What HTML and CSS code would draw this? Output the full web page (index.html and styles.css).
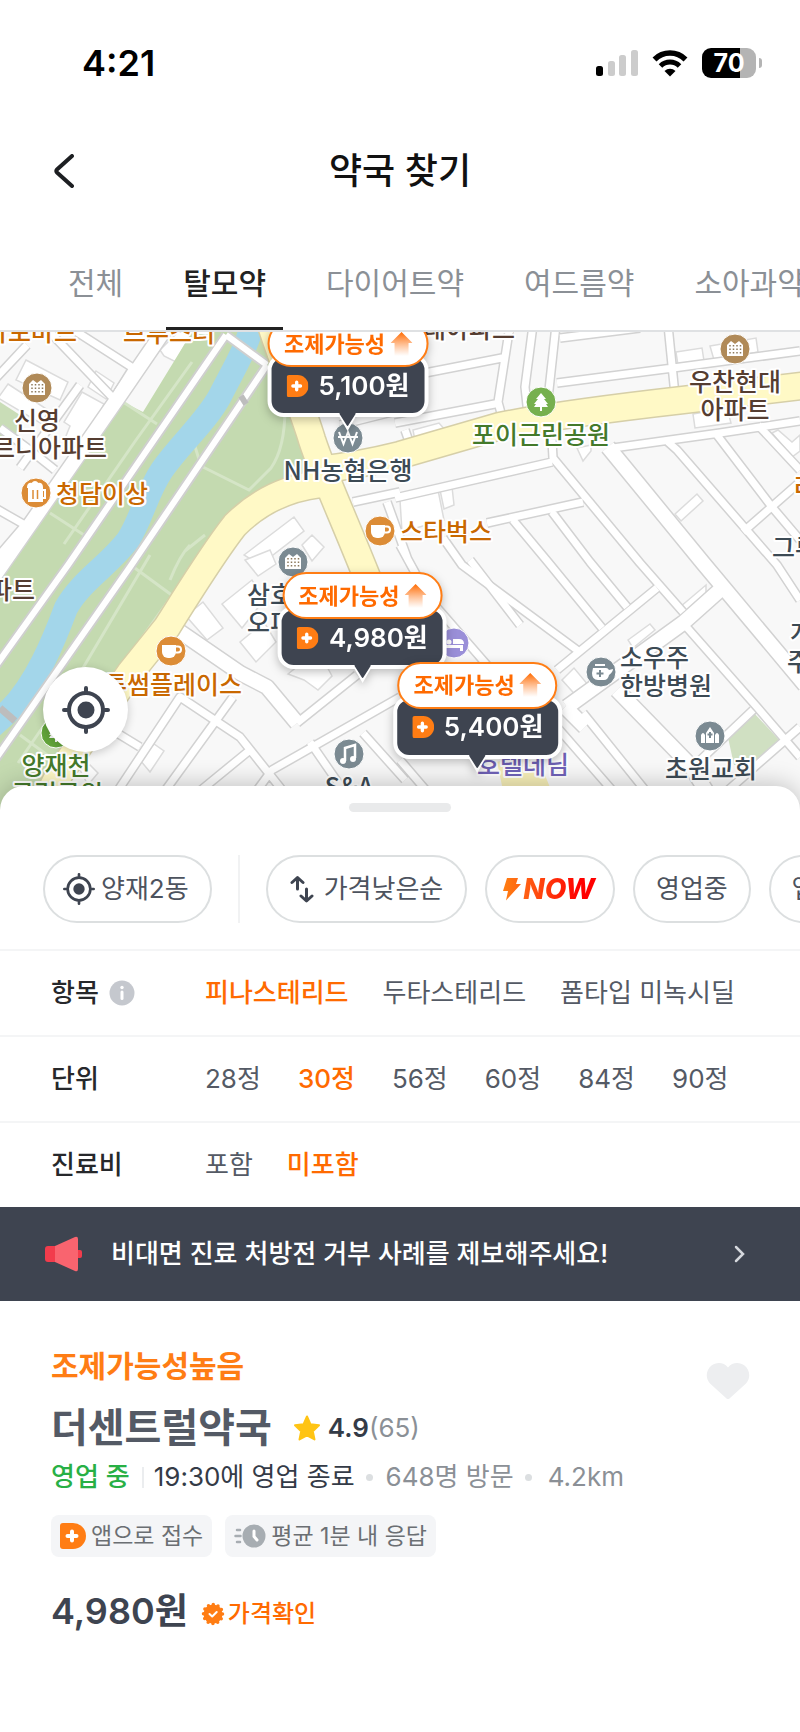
FILE: index.html
```html
<!DOCTYPE html>
<html lang="ko">
<head>
<meta charset="utf-8">
<meta name="viewport" content="width=device-width, initial-scale=1">
<title>약국 찾기</title>
<link rel="stylesheet" href="styles.css">
</head>
<body>
<svg class="defs" width="0" height="0" aria-hidden="true">
  <defs>
    <linearGradient id="arrowFade" x1="0" y1="0" x2="0" y2="1">
      <stop offset="0" stop-color="#ff6a00"/><stop offset="1" stop-color="#ff8a3c" stop-opacity="0"/>
    </linearGradient>
    <linearGradient id="boltFade" x1="0" y1="0" x2="1" y2="0">
      <stop offset="0" stop-color="#ff7f12"/><stop offset="1" stop-color="#ff6412"/>
    </linearGradient>
    <symbol id="target" viewBox="0 0 48 48">
      <circle cx="24" cy="24" r="17" fill="none" stroke="#3e4450" stroke-width="4"/>
      <circle cx="24" cy="24" r="8.500" fill="#3e4450"/>
      <path d="M24 2v5M24 41v5M2 24h5M41 24h5" stroke="#3e4450" stroke-width="4" stroke-linecap="round"/>
    </symbol>
    <symbol id="brand" viewBox="0 0 26 26">
      <path d="M3 0h10a13 13 0 0 1 0 26H3a3 3 0 0 1-3-3V3a3 3 0 0 1 3-3z" fill="#ff7d14"/>
      <path d="M12 8.500v9M7.500 13h9" stroke="#fff" stroke-width="4" stroke-linecap="round"/>
    </symbol>
    <symbol id="up" viewBox="0 0 22 24">
      <path d="M11 0 22 11h-4v13H4V11H0z" fill="url(#arrowFade)"/>
    </symbol>
    <symbol id="tail" viewBox="0 0 26 18">
      <path d="M1 4h4l8 14 8-14h4z" fill="#fff"/>
      <path d="M5 0h16v1l-7 11q-1 2-2 0L5 1z" fill="#3e4450"/>
    </symbol>
    <symbol id="apartment" viewBox="0 0 30 30">
      <path d="M7 22V11l4-4 4 3 4-3 4 4v11z" fill="#fff"/>
      <path d="M10 11v10M13.500 11v10M17 11v10M20.500 11v10" stroke="#8d7a5c" stroke-width="1.500" stroke-dasharray="1.500 2"/>
    </symbol>
    <symbol id="cup" viewBox="0 0 30 30">
      <path d="M6 9h14v7a6 6 0 0 1-6 6h-2a6 6 0 0 1-6-6z" fill="#fff"/>
      <path d="M20 10.500h2a2.500 2.500 0 0 1 0 6h-2.500" fill="none" stroke="#fff" stroke-width="2"/>
    </symbol>
    <symbol id="tree" viewBox="0 0 30 30">
      <path d="M15 6l5 6h-2l4 5h-2l2 3H8l2-3H8l4-5h-2z" fill="#fff"/><path d="M15 18v6" stroke="#fff" stroke-width="2"/>
    </symbol>
    <g id="lanes">
      <path d="M613 448 720 433 800 421M557 383 673 368 800 351M560 338 640 328M668 325 675 395M533 325 525 387 528 415M556 325 549 390 545 415M510 325 498 402 505 428M425 373 507 357M395 423 500 403M395 498 552 462M552 440 553 458 640 563 683 612M487 523 583 502M513 520 548 562 602 628M552 512 590 562 627 607M443 538 462 565 577 650M668 442 677 450 777 565 800 600M717 435 772 507 800 540M758 425 800 470M743 532 800 482M557 670 657 588M683 623 757 707 800 757M583 713 653 800M693 767 753 710M717 800 800 727M557 727 625 805M433 603 500 680 520 695M400 760 430 795M405 430 412 450"/>
      <path d="M310 742 350 800M297 723 357 675M115 795 180 697 240 737 290 800M117 733 140 747M162 795 233 697M195 795 250 750M250 800 272 770 400 697M363 733 405 780M27 345-4 378M43 325 113 398M66 325 133 368 118 392M80 385 20 468M0 428 30 450 55 470M-5 508 25 525-5 560M353 502 400 492M387 502 408 560M400 545 430 600M340 425 400 410M470 560 520 625"/>
    </g>
    <path id="parkRoads" d="M226 335 68 565-5 667M267 365 130 567-5 760M226 335l41 30"/>
    <path id="streets" d="M-5 575 68 470 118 398 170 322M608 447 703 563 805 685M173 627 240 673 267 687 297 723M567 707 683 623 720 590M617 690 690 765 715 805M565 707l20 20"/>
    <path id="avenues" d="M271 325C285 370 300 400 312 440 325 480 345 520 378 605M318 470Q360 465 400 455L500 426Q560 414 683 400L810 385M320 484Q270 490 235 525 215 550 167 627L130 673 60 773 40 812"/>
  </defs>
</svg>

<div class="app">
  <header class="top">
    <div class="status">
      <span class="status-time">4:21</span>
      <div class="status-icons">
        <svg width="42" height="28" viewBox="0 0 42 28" aria-hidden="true">
          <rect x="0" y="17" width="7" height="10" rx="2.500" fill="#000"/>
          <rect x="12" y="12" width="7" height="15" rx="2.500" fill="#ccc"/>
          <rect x="23" y="6" width="7" height="21" rx="2.500" fill="#ccc"/>
          <rect x="35" y="1" width="7" height="26" rx="2.500" fill="#ccc"/>
        </svg>
        <svg width="36" height="28" viewBox="0 0 36 28" aria-hidden="true">
          <path d="M2.500 10.500a22 22 0 0 1 31 0" fill="none" stroke="#000" stroke-width="5.500"/>
          <path d="M8.500 17a13.500 13.500 0 0 1 19 0" fill="none" stroke="#000" stroke-width="5"/>
          <path d="M12.500 22a8 8 0 0 1 11 0L18 27.500z" fill="#000"/>
        </svg>
        <span class="battery"><span class="battery-body">70</span><span class="battery-nub"></span></span>
      </div>
    </div>
    <div class="appbar">
      <button class="back" aria-label="뒤로">
        <svg width="20" height="34" viewBox="0 0 20 34" aria-hidden="true"><path d="M18 2 3 15.500q-1.500 1.500 0 3L18 32" fill="none" stroke="#1d1f22" stroke-width="4" stroke-linecap="round"/></svg>
      </button>
      <h1 class="title">약국 찾기</h1>
    </div>
    <nav class="tabs">
      <button class="tab">전체</button>
      <button class="tab tab-on">탈모약</button>
      <button class="tab">다이어트약</button>
      <button class="tab">여드름약</button>
      <button class="tab">소아과약</button>
    </nav>
  </header>

  <section class="map" aria-label="지도">
    <svg class="map-art" viewBox="0 332 800 480" aria-hidden="true">
      <rect x="0" y="332" width="800" height="480" fill="#f8f8f8"/>
      <g fill="#fff" stroke="#dcdcdc" stroke-width="1.500">
        <path d="M26 360l42 22-8 18-44-20zM8 384l40 26-6 14-44-26zM82 392l22 12-20 44-18-12 4-10-6-4zM96 371l18 12-8 16-18-12zM160 350l18-18 14 0-12 22-4 8-12-6zM244 555l50-38 10 14-44 34zM302 545l10-10 12 12-12 14z"/>
        <path d="M413 430l26-7 8 9-32 9zM400 500l38-10 6 30-42 12zM440 490l12-3 2 18-10 4zM676 352l26-4 2 13-26 4zM710 346l46-8 2 14-44 8zM693 414l34-6 4 15-36 5zM772 433l6-3 14 12 8-7v16l-8 6zM675 514l22-20 6 7-22 20zM577 448l14-3v6l-8 10z"/>
        <path d="M186 616l17-14 20 26-16 12zM222 604l30-24 12 20-22 28zM240 642l24-20 12 20-20 20zM288 674l30-24 14 26-14 14-14-10zM140 760l14-16 10 7-14 21zM562 680l12-12 20 24-14 8zM680 607l26-22v12l-22 16zM628 640l22-16 5 6-22 18zM245 560l25-10 6 14-18 12zM80 770l10-5 8 8-10 12z"/>
      </g>
      <path d="M192 332 143 412 123 402 13 560 0 580V812H40L60 775 130 673 207 565 235 525 287 492 310 470 300 425 262 332z" fill="#c4dab0"/>
      <path d="M0 402l20 13-6 30-14-8z" fill="#c9ddb7"/>
      <path d="M727 733l26-21 29 31-22 22-26 0z" fill="#d0e0c2"/>
      <g fill="none" stroke="#d5e5c7" stroke-width="3">
        <path d="M192 362l-56 78-72 104M123 402l34 22M50 513l34 22M193 440l8 26 48 24 22-22q14-20 14-60M190 545q-10 10-20 35M205 535l-20 16M128 563l45 33M176 590l-60 84M150 555l-70 118-62 90M20 735l30 22"/>
      </g>
      <path d="M252 325C246 350 232 372 220 396 206 422 180 444 162 470 146 494 142 518 128 540 108 566 80 582 66 608 54 640 36 684 10 710L-10 728" fill="none" stroke="#a3d6ea" stroke-width="24"/>
      <path d="M0 708l15 13" stroke="#bdbdbd" stroke-width="7"/>
      <path d="M262 332l8 26" stroke="#c4c4c4" stroke-width="5"/>

      <g fill="none" stroke-linejoin="round">
        <use href="#lanes" stroke="#d2d2d2" stroke-width="10"/>
        <use href="#streets" stroke="#d2d2d2" stroke-width="17"/>
        <use href="#lanes" stroke="#fff" stroke-width="7"/>
        <use href="#parkRoads" stroke="#cfcfcf" stroke-width="10"/>
        <use href="#parkRoads" stroke="#fff" stroke-width="6"/>
        <use href="#streets" stroke="#fff" stroke-width="14"/>
        <use href="#avenues" stroke="#d6cfa8" stroke-width="29"/>
        <use href="#avenues" stroke="#fff9c6" stroke-width="26"/>
      </g>
      <path d="M497 762l38-12 20 50h-50z" fill="#f7efb8"/>
      <path d="M241 396l5 8" stroke="#bdbdbd" stroke-width="6"/>

      <g class="poi-dots">
        <circle cx="37" cy="388" r="15" fill="#b08a58"/><circle cx="735" cy="349" r="15" fill="#b08a58"/>
        <circle cx="293" cy="562" r="15" fill="#7b8a92"/><circle cx="36" cy="493" r="15" fill="#dc8c36"/>
        <circle cx="380" cy="531" r="15" fill="#dc8c36"/><circle cx="171" cy="651" r="15" fill="#dc8c36"/>
        <circle cx="348" cy="438" r="15" fill="#7b8a92"/><circle cx="541" cy="402" r="15" fill="#76b04e"/>
        <circle cx="56" cy="733" r="15" fill="#62a53a"/><circle cx="454" cy="643" r="15" fill="#9a8fd8"/>
        <circle cx="349" cy="754" r="15" fill="#7b8a92"/><circle cx="601" cy="672" r="15" fill="#7b8a92"/>
        <circle cx="710" cy="736" r="15" fill="#7b8a92"/>
      </g>
      <use href="#apartment" x="22" y="373" width="30" height="30"/>
      <use href="#apartment" x="720" y="334" width="30" height="30"/>
      <use href="#apartment" x="278" y="547" width="30" height="30"/>
      <use href="#cup" x="365" y="516" width="30" height="30"/>
      <use href="#cup" x="156" y="636" width="30" height="30"/>
      <use href="#tree" x="526" y="387" width="30" height="30"/>
      <use href="#tree" x="41" y="718" width="30" height="30"/>
      <g fill="none" stroke="#fff" stroke-width="2">
        <path d="M28 487q0-4 4-3 3-4 6 0 4-1 4 3z" fill="#fff"/>
        <path d="M29 489h13v12H29z" fill="#fff"/><path d="M42 490h3v8h-3"/>
        <path d="M33 490v9M37.500 490v9" stroke="#dc8c36" stroke-width="1.500"/>
        <path d="M339 432l4.500 12 4.500-12 4.500 12 4.500-12M338 437h20"/>
        <path d="M345 761v-13l10-3v13" stroke-width="2.500"/>
      </g>
      <g fill="#fff">
        <circle cx="343" cy="761" r="3"/><circle cx="353" cy="759" r="3"/>
        <path d="M442 636h3v9h18v6h-3v-3h-15v3h-3zM453 639h6q5 0 5 5h-11z"/><circle cx="449" cy="642" r="2.500"/>
        <path d="M593 668h13q2 0 3 2l4-1q0 3-4 6-1 5-5 5h-6q-6 0-6-7zM595 664h10v2h-10z"/>
        <path d="M706 743v-10l4-6 4 6v10zM701 743v-8q2-4 4 0v8zM715 743v-8q2-4 4 0v8z"/>
      </g>
      <path d="M600 670v7M596.500 673.500h7M710 732v6M707.500 734.500h5" stroke="#7b8a92" stroke-width="2"/>

      <g class="poi">
        <g class="poi-brown">
          <text x="37" y="430" text-anchor="middle">신영</text>
          <text x="107" y="457" text-anchor="end">르니아파트</text>
          <text x="35" y="599" text-anchor="end">아파트</text>
          <text x="515" y="338" text-anchor="end">현대아파트</text>
          <text x="735" y="391" text-anchor="middle">우찬현대</text>
          <text x="735" y="419" text-anchor="middle">아파트</text>
        </g>
        <g class="poi-orange">
          <text x="77" y="341" text-anchor="end">바로마트</text>
          <text x="123" y="342">브루스터</text>
          <text x="56" y="503">청담이상</text>
          <text x="400" y="541">스타벅스</text>
          <text x="242" y="694" text-anchor="end">투썸플레이스</text>
          <text x="794" y="496">라</text>
        </g>
        <g class="poi-green">
          <text x="541" y="444" text-anchor="middle">포이근린공원</text>
          <text x="56" y="775" text-anchor="middle">양재천</text>
          <text x="57" y="803" text-anchor="middle">근린공원</text>
        </g>
        <g class="poi-grey">
          <text x="348" y="480" text-anchor="middle">NH농협은행</text>
          <text x="247" y="604">삼호</text><text x="247" y="632">오피</text>
          <text x="772" y="557">그루</text><text x="790" y="642">개</text><text x="787" y="671">주</text>
          <text x="620" y="667">소우주</text><text x="620" y="695">한방병원</text>
          <text x="711" y="778" text-anchor="middle">초원교회</text>
          <text x="349" y="796" text-anchor="middle">S&amp;A</text>
        </g>
        <g class="poi-purple"><text x="477" y="774">호텔데님</text></g>
      </g>
    </svg>

    <button class="marker marker-a">
      <span class="marker-tag">조제가능성<svg width="22" height="24"><use href="#up"/></svg></span>
      <span class="marker-price"><svg width="22" height="22"><use href="#brand"/></svg>5,100원</span>
      <svg class="marker-tail" width="26" height="18"><use href="#tail"/></svg>
    </button>
    <button class="marker marker-b">
      <span class="marker-tag">조제가능성<svg width="22" height="24"><use href="#up"/></svg></span>
      <span class="marker-price"><svg width="22" height="22"><use href="#brand"/></svg>4,980원</span>
      <svg class="marker-tail" width="26" height="18"><use href="#tail"/></svg>
    </button>
    <button class="marker marker-c">
      <span class="marker-tag">조제가능성<svg width="22" height="24"><use href="#up"/></svg></span>
      <span class="marker-price"><svg width="22" height="22"><use href="#brand"/></svg>5,400원</span>
      <svg class="marker-tail" width="26" height="18"><use href="#tail"/></svg>
    </button>
    <button class="locate" aria-label="현재 위치"><svg width="48" height="48"><use href="#target"/></svg></button>
  </section>

  <main class="sheet">
    <div class="handle"></div>
    <div class="chips">
      <button class="chip chip-place"><svg width="32" height="32"><use href="#target"/></svg>양재2동</button>
      <span class="chip-divider"></span>
      <button class="chip chip-sort">
        <svg width="24" height="28" viewBox="0 0 24 28" fill="none" stroke="#3e4450" stroke-width="3" stroke-linecap="round" stroke-linejoin="round" aria-hidden="true"><path d="M7.500 14V2.500M2 7.500l5.500-5 5.500 5M16.500 14v11.500M11 21l5.500 5 5.500-5"/></svg>
        가격낮은순
      </button>
      <button class="chip chip-now">
        <svg width="18" height="24" viewBox="0 0 18 24" aria-hidden="true"><path d="M4 1h11l-2 6h5L3 23.500 5 14H0z" fill="url(#boltFade)"/></svg>
        <span class="now">NOW</span>
      </button>
      <button class="chip">영업중</button>
      <button class="chip">앱접수</button>
    </div>

    <div class="filter">
      <div class="filter-label">항목
        <svg width="26" height="26" viewBox="0 0 26 26" aria-hidden="true"><circle cx="13" cy="13" r="12.500" fill="#c5c8ce"/><circle cx="13" cy="7.500" r="1.700" fill="#fff"/><path d="M13 12v6.500" stroke="#fff" stroke-width="3" stroke-linecap="round"/></svg>
      </div>
      <div class="options">
        <button class="option option-on">피나스테리드</button><button class="option">두타스테리드</button><button class="option">폼타입 미녹시딜</button>
      </div>
    </div>
    <div class="filter">
      <div class="filter-label">단위</div>
      <div class="options options-wide">
        <button class="option">28정</button><button class="option option-on">30정</button><button class="option">56정</button><button class="option">60정</button><button class="option">84정</button><button class="option">90정</button>
      </div>
    </div>
    <div class="filter">
      <div class="filter-label">진료비</div>
      <div class="options">
        <button class="option">포함</button><button class="option option-on">미포함</button>
      </div>
    </div>

    <a class="banner" href="#">
      <svg width="38" height="36" viewBox="0 0 38 36" aria-hidden="true">
        <rect x="30" y="14" width="7" height="8" rx="2" fill="#f23c4c"/>
        <path d="M3 10h9v16H3a3 3 0 0 1-3-3V13a3 3 0 0 1 3-3z" fill="#f23c4c"/>
        <path d="M10 10 30 1q3-1 3 2v30q0 3-3 2L10 26z" fill="#f9646f"/>
      </svg>
      <span class="banner-text">비대면 진료 처방전 거부 사례를 제보해주세요!</span>
      <svg width="12" height="18" viewBox="0 0 12 18" aria-hidden="true"><path d="M2 2l7 7-7 7" fill="none" stroke="#d5d8dd" stroke-width="2.500" stroke-linecap="round"/></svg>
    </a>

    <article class="card">
      <div class="card-main">
        <p class="likely">조제가능성높음</p>
        <div class="name-row">
          <h2 class="name">더센트럴약국</h2>
          <svg width="28" height="28" viewBox="0 0 28 28" aria-hidden="true"><path d="M14 2.500l3.500 7.800 8.500 1-6.200 5.900 1.700 8.300-7.500-4.200-7.500 4.200 1.700-8.300L2 11.300l8.500-1z" fill="#ffc414" stroke="#ffc414" stroke-width="2" stroke-linejoin="round"/></svg>
          <span class="rating"><strong class="score">4.9</strong>(65)</span>
        </div>
        <div class="info">
          <span class="open">영업 중</span><span class="bar"></span><span class="hours">19:30에 영업 종료</span><span class="dot"></span><span>648명 방문</span><span class="dot dot-wide"></span><span>4.2km</span>
        </div>
        <div class="tags">
          <span class="tag"><svg width="26" height="26"><use href="#brand"/></svg>앱으로 접수</span>
          <span class="tag"><svg width="32" height="24" viewBox="0 0 32 24" aria-hidden="true"><path d="M3 6h3M1.500 12h5M3 18h3" stroke="#a7adb2" stroke-width="2.500" stroke-linecap="round"/><circle cx="20" cy="12" r="11.500" fill="#a7adb2"/><path d="M20 7v5.500l3 3.500" fill="none" stroke="#fff" stroke-width="3" stroke-linecap="round"/></svg>평균 1분 내 응답</span>
        </div>
        <div class="price-row">
          <strong class="price">4,980원</strong>
          <span class="verified"><svg width="24" height="24" viewBox="0 0 24 24" aria-hidden="true"><circle cx="12" cy="12" r="9.500" fill="#ff7d14"/><circle cx="12" cy="12" r="9.500" fill="none" stroke="#ff7d14" stroke-width="3.500" stroke-dasharray="0 4.974" stroke-linecap="round"/><path d="M8.500 12l2.700 2.500 4.500-4.500" fill="none" stroke="#fff" stroke-width="2" stroke-linecap="round" stroke-linejoin="round"/></svg>가격확인</span>
        </div>
      </div>
      <button class="like" aria-label="찜하기">
        <svg width="44" height="38" viewBox="0 0 44 38" aria-hidden="true"><path d="M22 5.500C26 0 34 0 38.500 3.500 44 8 45 16 40 21.500L23.500 36.500q-1.500 1-3 0L4 21.500C-1 16 0 8 5.500 3.500 10 0 18 0 22 5.500z" fill="#edeef0"/></svg>
      </button>
    </article>
  </main>
</div>
</body>
</html>
```
FILE: styles.css
```css
* { box-sizing: border-box; margin: 0; }

body {
  background: #fff;
  color: #3e4450;
  font-family: Inter, "Noto Sans CJK KR", sans-serif;
  font-size: 26px;
  line-height: 36px;
}

button {
  padding: 0;
  border: 0;
  background: none;
  color: inherit;
  font: inherit;
  white-space: nowrap;
  cursor: pointer;
}

svg { flex: none; }
.defs { position: absolute; }
.app { display: flex; flex-direction: column; min-height: 100vh; overflow: hidden; }

/* Header */
.status {
  display: flex;
  align-items: center;
  justify-content: space-between;
  height: 126px;
  padding: 0 38px 0 82px;
}
.status-time { color: #000; font-size: 36px; font-weight: 600; }
.status-icons { display: flex; align-items: center; gap: 14px; }
.battery { display: flex; align-items: center; gap: 3px; }
.battery-body {
  width: 54px;
  border-radius: 9px;
  background: linear-gradient(to right, #000 38px, #b4b4b4 38px);
  color: #fff;
  font-size: 25px;
  font-weight: 700;
  line-height: 30px;
  text-align: center;
}
.battery-nub { width: 3px; height: 10px; border-radius: 0 3px 3px 0; background: #b4b4b4; }

.appbar {
  display: grid;
  grid-template-columns: 1fr auto 1fr;
  align-items: center;
  height: 90px;
  padding: 0 54px;
}
.back { display: flex; justify-self: start; }
.title { color: #111; font-size: 36px; font-weight: 500; line-height: 48px; }

.tabs {
  display: flex;
  gap: 26px;
  height: 116px;
  padding: 0 51px;
  border-bottom: 2px solid #dfe1e3;
  overflow: hidden;
}
.tab {
  flex: none;
  padding: 22px 17px 0;
  border-bottom: 3px solid transparent;
  color: #8b9096;
  font-size: 30px;
}
.tab-on { border-color: #222; color: #222; font-weight: 500; }

/* Map */
.map { position: relative; aspect-ratio: 800 / 480; overflow: hidden; }
.map-art { display: block; width: 100%; height: 100%; }
.poi-dots { stroke: #fff; stroke-width: 1; }
.poi {
  font-family: "Noto Sans CJK KR", sans-serif;
  font-size: 25px;
  font-weight: 500;
  paint-order: stroke;
  stroke: #fff;
  stroke-width: 4px;
  stroke-linejoin: round;
}
.poi-brown { fill: #553d31; }
.poi-orange { fill: #c96800; }
.poi-green { fill: #447a2b; }
.poi-grey { fill: #3c4a54; }
.poi-purple { fill: #7062b8; }

.marker {
  position: absolute;
  display: flex;
  flex-direction: column;
  align-items: center;
  transform: translateX(-50%);
  filter: drop-shadow(0 3px 5px rgba(0, 0, 0, 0.25));
}
.marker-a { left: 43.5%; top: -2.5%; }
.marker-b { left: 45.3%; top: 50%; }
.marker-c { left: 59.7%; top: 68.7%; }
.marker-tag {
  z-index: 1;
  display: flex;
  align-items: center;
  gap: 5px;
  height: 47px;
  padding: 0 14px;
  border: 2px solid #ff7d14;
  border-radius: 24px;
  background: #fff;
  color: #ff6a00;
  font-size: 22px;
  font-weight: 700;
}
.marker-price {
  display: flex;
  align-items: center;
  gap: 10px;
  height: 63px;
  margin-top: -13px;
  padding: 0 15px;
  border: 4px solid #fff;
  border-radius: 16px;
  background: #3e4450;
  color: #fff;
  font-weight: 600;
}
.marker-tail { z-index: 1; margin-top: -4px; }

.locate {
  position: absolute;
  left: 43px;
  bottom: 60px;
  display: grid;
  place-items: center;
  width: 85px;
  height: 85px;
  border-radius: 50%;
  background: #fff;
  box-shadow: 0 2px 10px rgba(0, 0, 0, 0.2);
}

/* Bottom sheet */
.sheet {
  position: relative;
  flex: 1;
  margin-top: -26px;
  padding-top: 17px;
  border-radius: 24px 24px 0 0;
  background: #fff;
  box-shadow: 0 -2px 24px rgba(0, 0, 0, 0.22);
}
.handle { width: 102px; height: 9px; margin: 0 auto; border-radius: 5px; background: #e9eaeb; }

.chips {
  display: flex;
  gap: 18px;
  padding: 43px 0 26px 43px;
  overflow: hidden;
}
.chip {
  display: flex;
  flex: none;
  align-items: center;
  height: 68px;
  padding: 0 21px;
  border: 2px solid #dcdfe0;
  border-radius: 34px;
  color: #4d535e;
}
.chip-place { gap: 6px; padding: 0 21px 0 18px; }
.chip-sort { gap: 10px; padding: 0 22px; }
.chip-now { gap: 2px; padding: 0 15px 0 16px; }
.chip-divider { flex: none; width: 2px; margin: 0 8px; background: #f1f2f3; }
.now {
  padding-right: 3px;
  background: linear-gradient(to right, #ff6414, #f00 75%);
  background-clip: text;
  -webkit-background-clip: text;
  color: transparent;
  font-size: 28px;
  font-style: italic;
  font-weight: 800;
}

.filter {
  display: grid;
  grid-template-columns: 154px 1fr;
  align-items: center;
  min-height: 86px;
  padding-left: 51px;
  border-top: 2px solid #f4f5f6;
}
.filter-label { display: flex; align-items: center; gap: 10px; color: #26282b; font-weight: 500; }
.options { display: flex; gap: 34px; overflow: hidden; }
.options-wide { gap: 37px; }
.option { flex: none; color: #545a65; }
.option-on { color: #ff6a00; font-weight: 500; }

.banner {
  display: flex;
  align-items: center;
  gap: 28px;
  min-height: 94px;
  padding: 0 54px 0 45px;
  background: #3e4450;
  color: #fff;
  font-weight: 500;
  text-decoration: none;
}
.banner-text { flex: 1; }

/* Pharmacy card */
.card { display: flex; justify-content: space-between; align-items: flex-start; padding: 44px 50px 60px 51px; }
.card-main { display: flex; flex-direction: column; }
.likely { color: #ff7d14; font-size: 30px; font-weight: 700; line-height: 42px; }
.name-row { display: flex; align-items: center; margin-top: 15px; line-height: 52px; }
.name { margin-right: 21px; color: #545a65; font-size: 40px; font-weight: 700; }
.rating { margin-left: 7px; color: #8b9096; }
.score { color: #343b47; font-weight: 600; }
.info { display: flex; align-items: center; margin-top: 5px; color: #8b9096; white-space: nowrap; }
.open { color: #28b045; font-weight: 500; }
.bar { width: 2px; height: 21px; margin: 0 10px 0 12px; background: #ebedef; }
.hours { color: #343b47; }
.dot { width: 7px; height: 7px; margin: 0 13px 0 11px; border-radius: 50%; background: #dcdfe1; }
.dot-wide { margin-right: 16px; }
.tags { display: flex; gap: 13px; margin-top: 20px; }
.tag {
  display: flex;
  align-items: center;
  gap: 5px;
  height: 42px;
  padding: 0 9px;
  border-radius: 8px;
  background: #f4f5f7;
  color: #6b6f73;
  font-size: 23px;
}
.price-row { display: flex; align-items: center; gap: 13px; margin-top: 26px; line-height: 50px; }
.price { font-size: 36px; font-weight: 600; }
.verified { display: flex; align-items: center; gap: 3px; padding-top: 6px; color: #ff6a00; font-size: 24px; font-weight: 500; }
.like { display: flex; margin-top: 17px; }
```
